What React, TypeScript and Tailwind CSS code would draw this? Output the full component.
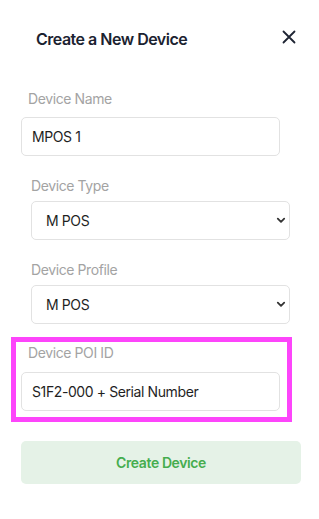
import React from "react";

function Chevron() {
  return (
    <svg width="10" height="7" viewBox="0 0 10 7" className="shrink-0">
      <path d="M1.8 1.6 L5 4.8 L8.2 1.6" fill="none" stroke="#333" strokeWidth="1.8" strokeLinecap="round" strokeLinejoin="round" />
    </svg>
  );
}

function SelectBox({ value }: { value: string }) {
  return (
    <div className="mt-[5px] h-[39px] border border-[#e2e2e2] rounded-[5px] flex items-center justify-between pl-[14px] pr-[3px] text-[14px] text-[#1f1f1f]">
      <span>{value}</span>
      <Chevron />
    </div>
  );
}

export default function App() {
  return (
    <div className="w-[319px] h-[519px] bg-white font-['Inter',sans-serif] tracking-[-0.4px] pt-[28px]">
      <div className="flex justify-between items-start pl-[36px] pr-[23px]">
        <h2 className="text-[16px] leading-[22px] font-semibold tracking-[-0.5px] text-[#1b2230]">Create a New Device</h2>
        <svg width="14" height="14" viewBox="0 0 14 14" className="mt-[2px]">
          <path d="M1.5 1.5 L12.5 12.5 M12.5 1.5 L1.5 12.5" stroke="#1e2433" strokeWidth="1.8" strokeLinecap="round" />
        </svg>
      </div>

      <div className="mt-[39px] ml-[21px] w-[259px]">
        <div className="pl-[7px] text-[14px] leading-[20px] text-[#a3a3a3]">Device Name</div>
        <div className="mt-[8px] h-[39px] border border-[#e2e2e2] rounded-[5px] flex items-center pl-[10px] text-[14px] text-[#1f1f1f]">
          MPOS 1
        </div>
      </div>

      <div className="mt-[20px] ml-[31px] w-[259px]">
        <div className="text-[14px] leading-[20px] text-[#a3a3a3]">Device Type</div>
        <SelectBox value="M POS" />
      </div>

      <div className="mt-[20px] ml-[31px] w-[259px]">
        <div className="text-[14px] leading-[20px] text-[#a3a3a3]">Device Profile</div>
        <SelectBox value="M POS" />
      </div>

      <div className="mt-[13px] ml-[11px] w-[281px] border-[5px] border-[#fd45fb] pt-[1px] pb-[6px]">
        <div className="pl-[12px] text-[14px] leading-[20px] text-[#a3a3a3]">Device POI ID</div>
        <div className="mt-[9px] ml-[5px] w-[259px] h-[39px] border border-[#e2e2e2] rounded-[5px] flex items-center pl-[10px] text-[14px] text-[#1f1f1f]">
          S1F2-000 + Serial Number
        </div>
      </div>

      <button className="mt-[19px] ml-[21px] w-[280px] h-[43px] bg-[#e5f2e7] rounded-[5px] text-[14px] font-semibold text-[#45ad4e] flex items-center justify-center">
        Create Device
      </button>
    </div>
  );
}
